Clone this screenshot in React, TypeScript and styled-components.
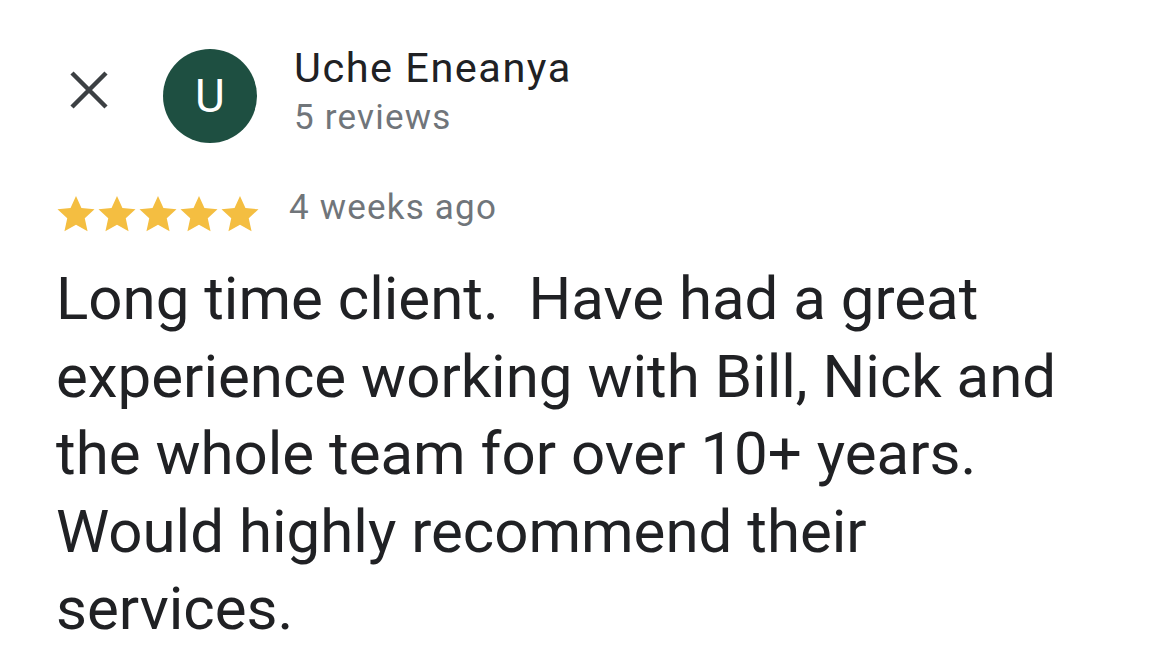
import styled, {createGlobalStyle} from "styled-components";
import {FC} from "react";

const GlobalStyle = createGlobalStyle`
    html, body {
        margin: 0;
        padding: 0;
        background: #ffffff;
    }
    body {
        font-family: Roboto, "Noto Sans", Arial, sans-serif;
        color: #202124;
    }
`;

const Page = styled.div`
    width: 1156px;
    height: 659px;
    box-sizing: border-box;
    padding: 43px 40px 0 56px;
    overflow: hidden;
`;

const Header = styled.div`
    display: flex;
    align-items: flex-start;
`;

const CloseButton = styled.button`
    width: 56px;
    height: 56px;
    padding: 0;
    margin: 19px 0 0 5px;
    border: none;
    background: none;
    display: flex;
    align-items: center;
    justify-content: center;
`;

const Avatar = styled.div`
    width: 94px;
    height: 94px;
    border-radius: 50%;
    background: #1e4f41;
    color: #ffffff;
    font-size: 46px;
    display: flex;
    align-items: center;
    justify-content: center;
    margin: 6px 0 0 46px;
`;

const Author = styled.div`
    display: flex;
    flex-direction: column;
    gap: 5px;
    margin-left: 37px;
`;

const Name = styled.div`
    font-size: 41.5px;
    line-height: 50px;
    letter-spacing: 1.5px;
    color: #202124;
`;

const Sub = styled.div`
    font-size: 35px;
    line-height: 40px;
    letter-spacing: 1.2px;
    color: #70757a;
`;

const RatingRow = styled.div`
    display: flex;
    align-items: flex-start;
    margin-top: 52px;
`;

const Stars = styled.div`
    display: flex;
    gap: 1px;
`;

const When = styled(Sub)`
    margin: -7px 0 0 29px;
`;

const Body = styled.p`
    margin: 27px 0 0;
    font-size: 60px;
    line-height: 77.5px;
    color: #202124;
    white-space: nowrap;
`;

const Star: FC = () => (
    <svg width="40" height="38" viewBox="0 0 24 23">
        <path
            fill="#f4be41"
            d="M12 0.6l3.3 7.3 7.9 0.8-5.9 5.3 1.7 7.9L12 18l-7 3.9 1.7-7.9L0.8 8.7l7.9-0.8z"
        />
    </svg>
);

const lines = [
    "Long time client.\u00a0 Have had a great",
    "experience working with Bill, Nick and",
    "the whole team for over 10+ years.",
    "Would highly recommend their",
    "services.",
];

const App: FC = () => (
    <>
        <GlobalStyle/>
        <Page>
            <Header>
                <CloseButton aria-label="Close">
                    <svg width="40" height="40" viewBox="0 0 40 40">
                        <path d="M3 3L37 37M37 3L3 37" stroke="#3c4043" strokeWidth="4.5"/>
                    </svg>
                </CloseButton>
                <Avatar>U</Avatar>
                <Author>
                    <Name>Uche Eneanya</Name>
                    <Sub>5 reviews</Sub>
                </Author>
            </Header>
            <RatingRow>
                <Stars>
                    {[0, 1, 2, 3, 4].map((i) => <Star key={i}/>)}
                </Stars>
                <When>4 weeks ago</When>
            </RatingRow>
            <Body>
                {lines.map((line, i) => (
                    <span key={i}>
                        {line}
                        {i < lines.length - 1 && <br/>}
                    </span>
                ))}
            </Body>
        </Page>
    </>
);

export default App;
